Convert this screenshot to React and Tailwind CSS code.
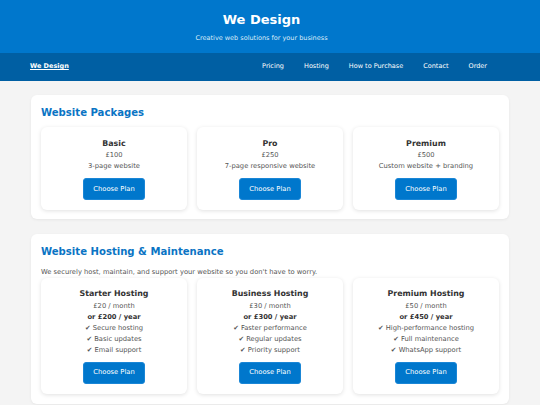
const PACKAGES = [
  { name: 'Basic', price: '£100', lines: ['3-page website'] },
  { name: 'Pro', price: '£250', lines: ['7-page responsive website'] },
  { name: 'Premium', price: '£500', lines: ['Custom website + branding'] },
];

const HOSTING = [
  {
    name: 'Starter Hosting',
    price: '£20 / month',
    yearly: 'or £200 / year',
    lines: ['✔ Secure hosting', '✔ Basic updates', '✔ Email support'],
  },
  {
    name: 'Business Hosting',
    price: '£30 / month',
    yearly: 'or £300 / year',
    lines: ['✔ Faster performance', '✔ Regular updates', '✔ Priority support'],
  },
  {
    name: 'Premium Hosting',
    price: '£50 / month',
    yearly: 'or £450 / year',
    lines: ['✔ High-performance hosting', '✔ Full maintenance', '✔ WhatsApp support'],
  },
];

const NAV = ['Pricing', 'Hosting', 'How to Purchase', 'Contact', 'Order'];

function PlanCard({ name, price, yearly, lines }) {
  return (
    <div className="flex flex-col items-center rounded-md bg-white px-2 pt-[10.5px] pb-[10px] text-center shadow-[0_1px_4px_rgba(0,0,0,0.12)]">
      <h3 className="mb-[0.5px] text-[7.9px] leading-[12px] font-bold text-[#333]">{name}</h3>
      <p className="text-[6.75px] leading-[11px] text-[#555]">{price}</p>
      {yearly && <p className="text-[6.75px] leading-[11px] font-bold text-[#333]">{yearly}</p>}
      {lines.map((l) => (
        <p key={l} className="text-[6.75px] leading-[11px] text-[#555]">
          {l}
        </p>
      ))}
      <button
        type="button"
        className="mt-[6px] h-[22px] w-[62px] rounded-[3px] border border-[#1a86d6] bg-[#0077cc] text-[6.75px] text-white"
      >
        Choose Plan
      </button>
    </div>
  );
}

export default function App() {
  return (
    <div className="min-h-[405px] bg-[#f4f4f4] font-['DejaVu_Sans',sans-serif]">
      <header className="flex h-[53px] flex-col items-center justify-center bg-[#0077cc] pr-[17px] text-white">
        <h1 className="text-[13px] leading-[18px] font-bold">We Design</h1>
        <p className="mt-[5px] text-[6.5px] leading-[9px] text-[#dcecf8]">
          Creative web solutions for your business
        </p>
      </header>

      <nav className="flex h-[28px] items-center justify-between bg-[#005fa3] pr-[53px] pl-[30px] text-[6.5px] text-white">
        <a className="font-bold underline">We Design</a>
        <div className="flex gap-[20px]">
          {NAV.map((n) => (
            <a key={n}>{n}</a>
          ))}
        </div>
      </nav>

      <main className="space-y-[15px] px-[31px] pt-[14px] pb-[2px]">
        <section className="rounded-md bg-white px-[10px] pt-[10px] pb-[9px] shadow-[0_1px_3px_rgba(0,0,0,0.06)]">
          <h2 className="mb-[6px] text-[10.1px] leading-[16px] font-bold text-[#0a74c4]">
            Website Packages
          </h2>
          <div className="grid grid-cols-3 gap-[10px]">
            {PACKAGES.map((p) => (
              <PlanCard key={p.name} {...p} />
            ))}
          </div>
        </section>

        <section className="rounded-md bg-white px-[10px] pt-[10px] pb-[10px] shadow-[0_1px_3px_rgba(0,0,0,0.06)]">
          <h2 className="mb-[6.5px] text-[10.1px] leading-[16px] font-bold text-[#0a74c4]">
            Website Hosting &amp; Maintenance
          </h2>
          <p className="text-[6.75px] leading-[11px] text-[#555]">
            We securely host, maintain, and support your website so you don't have to worry.
          </p>
          <div className="grid grid-cols-3 gap-[10px]">
            {HOSTING.map((p) => (
              <PlanCard key={p.name} {...p} />
            ))}
          </div>
        </section>
      </main>
    </div>
  );
}
